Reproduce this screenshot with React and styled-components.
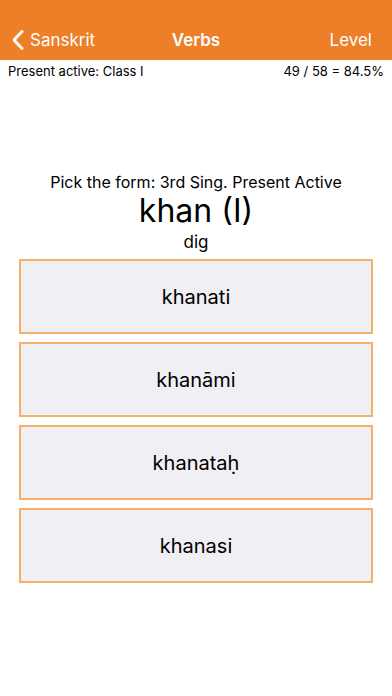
import React from 'react'
import styled, { createGlobalStyle } from 'styled-components'

const GlobalStyle = createGlobalStyle`
  html, body {
    margin: 0;
    padding: 0;
    background: #ffffff;
  }
  body {
    font-family: Inter, "Liberation Sans", sans-serif;
    color: #000;
  }
`

const Screen = styled.div`
  width: 392px;
  height: 696px;
  display: flex;
  flex-direction: column;
  background: #fff;
`

const NavBar = styled.div`
  background: #ed7f28;
  height: 60px;
  padding-top: 20px;
  box-sizing: border-box;
  display: grid;
  grid-template-columns: 1fr auto 1fr;
  align-items: center;
  color: #fff;
  font-size: 17px;
`

const BackButton = styled.div`
  display: flex;
  align-items: center;
  gap: 6px;
  padding-left: 12px;
`

const Title = styled.div`
  font-weight: 600;
`

const RightItem = styled.div`
  justify-self: end;
  padding-right: 20px;
`

const InfoRow = styled.div`
  display: flex;
  justify-content: space-between;
  padding: 3px 8px 0 8px;
  font-size: 13px;
  line-height: 17px;
`

const Question = styled.div`
  margin-top: 92px;
  display: flex;
  flex-direction: column;
  align-items: center;
`

const Prompt = styled.div`
  font-size: 16px;
  line-height: 20px;
`

const Word = styled.div`
  margin-top: 2px;
  font-size: 32px;
  line-height: 34px;
`

const Meaning = styled.div`
  margin-top: 4px;
  font-size: 17px;
  line-height: 20px;
`

const Choices = styled.div`
  margin: 7px 19px 0 19px;
  display: flex;
  flex-direction: column;
  gap: 8px;
`

const Choice = styled.div`
  height: 75px;
  box-sizing: border-box;
  border: 2px solid #f7b06a;
  background: #efeff4;
  display: flex;
  align-items: center;
  justify-content: center;
  font-size: 20px;
`

const Chevron = () => (
  <svg width="12" height="20" viewBox="0 0 12 20">
    <path d="M10 1.5 L2 10 L10 18.5" fill="none" stroke="#fff" strokeWidth="3" strokeLinecap="round" strokeLinejoin="round" />
  </svg>
)

const choices = ['khanati', 'khanāmi', 'khanataḥ', 'khanasi']

export default function App() {
  return (
    <Screen>
      <GlobalStyle />
      <NavBar>
        <BackButton>
          <Chevron />
          <span>Sanskrit</span>
        </BackButton>
        <Title>Verbs</Title>
        <RightItem>Level</RightItem>
      </NavBar>
      <InfoRow>
        <span>Present active: Class I</span>
        <span>49 / 58 = 84.5%</span>
      </InfoRow>
      <Question>
        <Prompt>Pick the form: 3rd Sing. Present Active</Prompt>
        <Word>khan (I)</Word>
        <Meaning>dig</Meaning>
      </Question>
      <Choices>
        {choices.map(c => (
          <Choice key={c}>{c}</Choice>
        ))}
      </Choices>
    </Screen>
  )
}
